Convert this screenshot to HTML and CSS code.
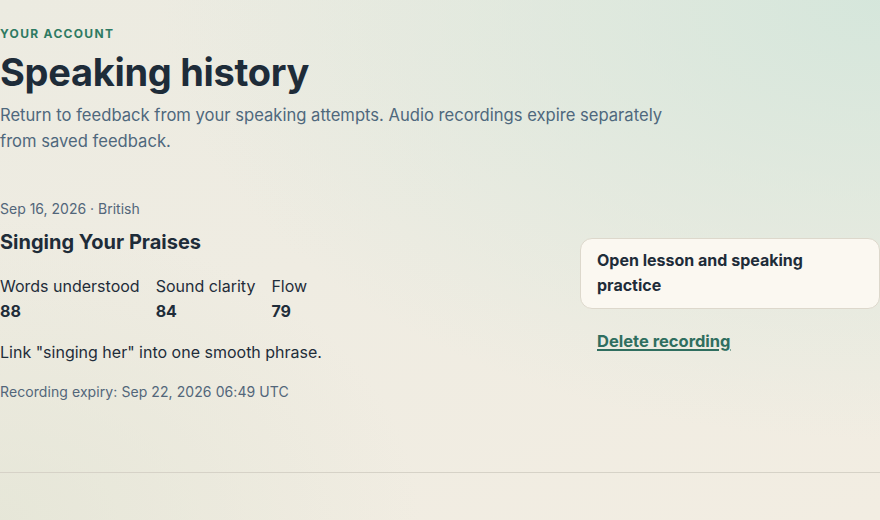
FILE: index.html
```html
<!DOCTYPE html>
<html lang="en">
<head>
<meta charset="utf-8">
<title>Speaking history</title>
<link rel="stylesheet" href="styles.css">
</head>
<body>
<main class="page">
  <header class="intro">
    <p class="eyebrow">YOUR ACCOUNT</p>
    <h1 class="title">Speaking history</h1>
    <p class="lede">Return to feedback from your speaking attempts. Audio recordings expire separately from saved feedback.</p>
  </header>
  <section class="history">
    <article class="attempt">
      <div class="attempt-main">
        <p class="meta">Sep 16, 2026 · British</p>
        <h2 class="attempt-title">Singing Your Praises</h2>
        <dl class="scores">
          <div class="score"><dt>Words understood</dt><dd>88</dd></div>
          <div class="score"><dt>Sound clarity</dt><dd>84</dd></div>
          <div class="score"><dt>Flow</dt><dd>79</dd></div>
        </dl>
        <p class="tip">Link "singing her" into one smooth phrase.</p>
        <p class="expiry">Recording expiry: Sep 22, 2026 06:49 UTC</p>
      </div>
      <div class="attempt-actions">
        <a class="open-card" href="#">Open lesson and speaking practice</a>
        <a class="delete-link" href="#">Delete recording</a>
      </div>
    </article>
  </section>
</main>
</body>
</html>
```
FILE: styles.css
```css
html, body {
  margin: 0;
  padding: 0;
}
body {
  width: 880px;
  height: 520px;
  overflow: hidden;
  font-family: Inter, "Noto Sans", sans-serif;
  color: #1f2d3a;
  background:
    radial-gradient(ellipse 720px 440px at 100% 0%, rgba(212, 230, 219, 0.95), rgba(212, 230, 219, 0) 100%),
    radial-gradient(ellipse 420px 300px at 0% 100%, rgba(226, 228, 212, 0.7), rgba(226, 228, 212, 0) 100%),
    linear-gradient(160deg, #ecebe1 0%, #efece2 45%, #f2ede2 100%);
}
.page {
  padding-top: 26px;
}
.eyebrow {
  margin: 0;
  font-size: 12px;
  line-height: 16px;
  font-weight: 700;
  letter-spacing: 0.11em;
  color: #2e7a62;
}
.title {
  margin: 9px 0 0;
  font-size: 38px;
  line-height: 42px;
  font-weight: 700;
  letter-spacing: -0.008em;
  color: #1e2c39;
}
.lede {
  margin: 9px 0 0;
  max-width: 690px;
  font-size: 16.6px;
  line-height: 26px;
  color: #4f687d;
}
.history {
  margin-top: 45px;
}
.attempt {
  display: grid;
  grid-template-columns: 1fr 300px;
  align-items: center;
  padding-bottom: 70px;
  border-bottom: 1px solid #d6d2c7;
}
.meta {
  margin: 0;
  font-size: 14px;
  line-height: 20px;
  color: #52667a;
}
.attempt-title {
  margin: 9px 0 0;
  font-size: 20px;
  line-height: 28px;
  font-weight: 700;
  color: #1e2c39;
}
.scores {
  display: flex;
  gap: 16px;
  margin: 18px 0 0;
}
.score dt {
  font-size: 16px;
  line-height: 25px;
  color: #1f2d3a;
}
.score dd {
  margin: 0;
  font-size: 16px;
  line-height: 25px;
  font-weight: 700;
  color: #1f2d3a;
}
.tip {
  margin: 16px 0 0;
  font-size: 16px;
  line-height: 24px;
  color: #1f2d3a;
}
.expiry {
  margin: 18px 0 0;
  font-size: 14px;
  line-height: 20px;
  letter-spacing: 0.08px;
  color: #52667a;
}
.attempt-actions {
  display: flex;
  flex-direction: column;
  align-items: stretch;
  margin-top: -10px;
}
.open-card {
  display: block;
  padding: 9px 60px 10px 16px;
  border: 1px solid #ddd8cc;
  border-radius: 12px;
  background: #fbf8f1;
  font-size: 16px;
  line-height: 25px;
  font-weight: 700;
  color: #1e2c39;
  text-decoration: none;
}
.delete-link {
  align-self: flex-start;
  margin: 20px 0 0 17px;
  font-size: 16.5px;
  line-height: 24px;
  font-weight: 700;
  color: #2f6e5f;
  text-decoration: underline;
  text-decoration-thickness: 2px;
  text-underline-offset: 2px;
}
```
